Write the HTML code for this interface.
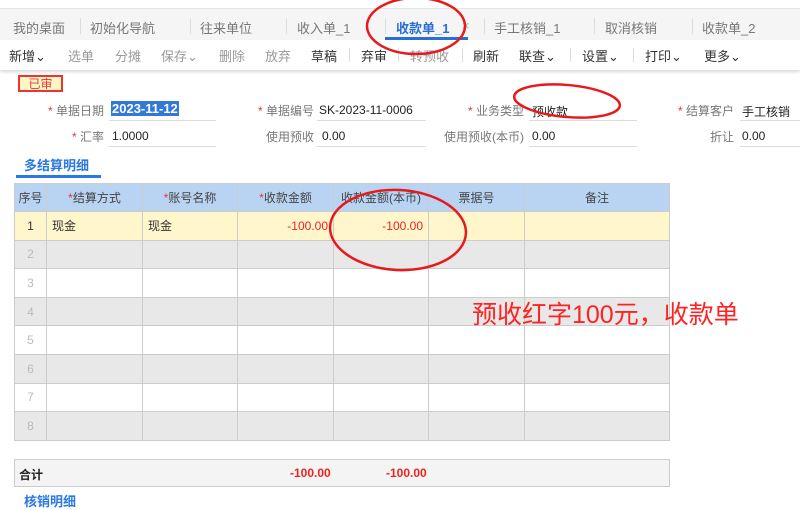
<!DOCTYPE html>
<html><head><meta charset="utf-8"><style>
*{margin:0;padding:0;box-sizing:border-box}
body{width:800px;height:509px;overflow:hidden;background:#fff;font-family:"Liberation Sans","Noto Sans CJK SC",sans-serif;font-size:12px;color:#333;position:relative}
.a{position:absolute;white-space:nowrap}
.tab{color:#777;font-size:13px;top:18px}
.sep{position:absolute;width:1px;background:#ddd}
.tb{font-size:13px;top:46px;color:#333}
.tb.g{color:#999}
.lbl{color:#777;text-align:right}
.st{color:#e33}
.ul{position:absolute;height:1px;background:#ddd}
table{position:absolute;left:14px;top:183px;border-collapse:collapse;width:656px}
td{border:1px solid #ccc;height:28.6px;font-size:12px;padding:0 5px}
tr.h td{background:#b9d4f2;text-align:center;color:#444;height:28px}
tr.y td{background:#fff6cc}
tr.g td{background:#e8e8e8}
.n{text-align:center;color:#bbb}
.r{color:#e22;text-align:right}
</style></head><body>
<div class="a" style="left:0;top:8px;width:800px;height:32px;background:#f5f5f5;border-top:1px solid #e4e4e4"></div>
<div class="a tab" style="left:13px">我的桌面</div>
<div class="sep" style="left:80px;top:18px;height:16px"></div>
<div class="a tab" style="left:90px">初始化导航</div>
<div class="sep" style="left:190px;top:18px;height:16px"></div>
<div class="a tab" style="left:200px">往来单位</div>
<div class="sep" style="left:286px;top:18px;height:16px"></div>
<div class="a tab" style="left:297px">收入单_1</div>
<div class="sep" style="left:385px;top:18px;height:16px"></div>
<div class="a tab" style="left:396px;color:#2a6fd6;font-weight:bold">收款单_1</div>
<div class="a" style="left:462px;top:18px;color:#aaa;font-size:13px">×</div>
<div class="a" style="left:385px;top:37px;width:83px;height:3px;background:#2a6fd6"></div>
<div class="sep" style="left:484px;top:18px;height:16px"></div>
<div class="a tab" style="left:494px">手工核销_1</div>
<div class="sep" style="left:594px;top:18px;height:16px"></div>
<div class="a tab" style="left:605px">取消核销</div>
<div class="sep" style="left:692px;top:18px;height:16px"></div>
<div class="a tab" style="left:702px">收款单_2</div>
<div class="a" style="left:0;top:40px;width:800px;height:30px;background:#fff;box-shadow:0 2px 3px rgba(0,0,0,.15)"></div>
<div class="a tb" style="left:9px">新增⌄</div>
<div class="a tb g" style="left:68px">选单</div>
<div class="a tb g" style="left:115px">分摊</div>
<div class="a tb g" style="left:161px">保存⌄</div>
<div class="a tb g" style="left:219px">删除</div>
<div class="a tb g" style="left:265px">放弃</div>
<div class="a tb" style="left:311px">草稿</div>
<div class="sep" style="left:349px;top:48px;height:14px"></div>
<div class="a tb" style="left:361px">弃审</div>
<div class="sep" style="left:398px;top:48px;height:14px"></div>
<div class="a tb g" style="left:410px">转预收</div>
<div class="sep" style="left:462px;top:48px;height:14px"></div>
<div class="a tb" style="left:473px">刷新</div>
<div class="a tb" style="left:519px">联查⌄</div>
<div class="sep" style="left:570px;top:48px;height:14px"></div>
<div class="a tb" style="left:582px">设置⌄</div>
<div class="sep" style="left:633px;top:48px;height:14px"></div>
<div class="a tb" style="left:645px">打印⌄</div>
<div class="a tb" style="left:704px">更多⌄</div>
<div class="a" style="left:18px;top:75px;width:45px;height:17px;border:2px solid #e33;background:#fff6c4;color:#e33;text-align:center;font-size:12px;line-height:14px">已审</div>
<div class="a lbl" style="left:40px;top:102px;width:64px"><span class="st">* </span>单据日期</div>
<div class="a" style="left:111px;top:101px;background:#3178d8;color:#fff;font-size:13px;font-weight:bold;padding:0 1px">2023-11-12</div>
<div class="ul" style="left:109px;top:120px;width:107px"></div>
<div class="a lbl" style="left:250px;top:102px;width:64px"><span class="st">* </span>单据编号</div>
<div class="a" style="left:319px;top:103px;font-size:12px;color:#222">SK-2023-11-0006</div>
<div class="ul" style="left:317px;top:120px;width:109px"></div>
<div class="a lbl" style="left:460px;top:102px;width:64px"><span class="st">* </span>业务类型</div>
<div class="a" style="left:532px;top:103px;color:#222">预收款</div>
<div class="ul" style="left:529px;top:120px;width:108px"></div>
<div class="a lbl" style="left:670px;top:102px;width:64px"><span class="st">* </span>结算客户</div>
<div class="a" style="left:742px;top:103px;color:#222">手工核销</div>
<div class="ul" style="left:740px;top:120px;width:60px"></div>
<div class="a lbl" style="left:40px;top:128px;width:64px"><span class="st">* </span>汇率</div>
<div class="a" style="left:112px;top:129px;color:#222">1.0000</div>
<div class="ul" style="left:109px;top:146px;width:107px"></div>
<div class="a lbl" style="left:250px;top:128px;width:64px">使用预收</div>
<div class="a" style="left:322px;top:129px;color:#222">0.00</div>
<div class="ul" style="left:317px;top:146px;width:109px"></div>
<div class="a lbl" style="left:430px;top:128px;width:94px">使用预收(本币)</div>
<div class="a" style="left:532px;top:129px;color:#222">0.00</div>
<div class="ul" style="left:529px;top:146px;width:108px"></div>
<div class="a lbl" style="left:670px;top:128px;width:64px">折让</div>
<div class="a" style="left:742px;top:129px;color:#222">0.00</div>
<div class="ul" style="left:740px;top:146px;width:60px"></div>
<div class="a" style="left:24px;top:155px;color:#2a78e0;font-size:13px;font-weight:bold">多结算明细</div>
<div class="a" style="left:16px;top:175px;width:85px;height:3px;background:#2a78e0"></div>
<table>
<tr class="h"><td style="width:32px;padding:0">序号</td><td style="width:96px"><span class="st">*</span>结算方式</td><td style="width:95px"><span class="st">*</span>账号名称</td><td style="width:96px"><span class="st">*</span>收款金额</td><td style="width:95px">收款金额(本币)</td><td style="width:96px">票据号</td><td>备注</td></tr>
<tr class="y"><td class="n" style="color:#333">1</td><td>现金</td><td>现金</td><td class="r">-100.00</td><td class="r">-100.00</td><td></td><td></td></tr>
<tr class="g"><td class="n">2</td><td></td><td></td><td></td><td></td><td></td><td></td></tr>
<tr><td class="n">3</td><td></td><td></td><td></td><td></td><td></td><td></td></tr>
<tr class="g"><td class="n">4</td><td></td><td></td><td></td><td></td><td></td><td></td></tr>
<tr><td class="n">5</td><td></td><td></td><td></td><td></td><td></td><td></td></tr>
<tr class="g"><td class="n">6</td><td></td><td></td><td></td><td></td><td></td><td></td></tr>
<tr><td class="n">7</td><td></td><td></td><td></td><td></td><td></td><td></td></tr>
<tr class="g"><td class="n">8</td><td></td><td></td><td></td><td></td><td></td><td></td></tr>
</table>
<div class="a" style="left:14px;top:459px;width:656px;height:28px;background:#f4f4f4;border:1px solid #ccc"></div>
<div class="a" style="left:19px;top:466px;font-weight:bold;color:#222">合计</div>
<div class="a" style="left:290px;top:466px;color:#e22;font-weight:bold">-100.00</div>
<div class="a" style="left:386px;top:466px;color:#e22;font-weight:bold">-100.00</div>
<div class="a" style="left:24px;top:491px;color:#2a78e0;font-size:13px;font-weight:bold">核销明细</div>
<div class="a" style="left:472px;top:295px;color:#f22;font-size:25px">预收红字100元，收款单</div>
<svg class="a" style="left:0;top:0" width="800" height="509">
<g fill="none" stroke="#e8191b" stroke-width="2.5">
<ellipse cx="416" cy="26" rx="49" ry="28"/>
<ellipse cx="567" cy="101" rx="53" ry="16" transform="rotate(5 567 101)"/>
<ellipse cx="398" cy="230" rx="68" ry="40" transform="rotate(3 398 230)"/>
</g></svg>
</body></html>
